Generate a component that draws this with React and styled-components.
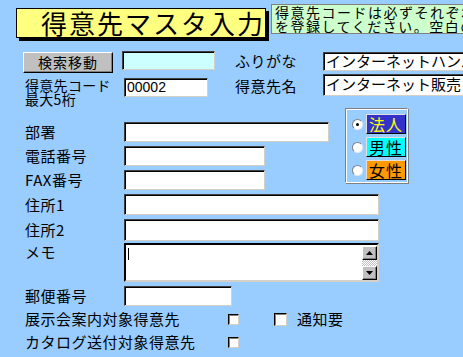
import React from 'react';
import styled, { createGlobalStyle } from 'styled-components';

const GlobalStyle = createGlobalStyle`
    body {
        margin: 0;
        background: #99ccff;
        font-family: 'Noto Sans CJK JP', 'Noto Sans', sans-serif;
    }
`;

const Page = styled.div`
    width: 463px;
    height: 357px;
    overflow: hidden;
    background: #99ccff;
    display: flex;
    flex-direction: column;
    color: #000;
`;

const Header = styled.div`
    display: flex;
    align-items: flex-start;
    height: 42px;
    flex: none;
`;

const TitleBox = styled.div`
    flex: none;
    box-sizing: border-box;
    margin: 8px 0 0 16px;
    width: 250px;
    height: 30px;
    padding-left: 24px;
    border: 1px solid #000;
    background: #ffff80;
    box-shadow: 3px 3px 0 #000;
    font-size: 26px;
    line-height: 28px;
    letter-spacing: 2px;
    white-space: nowrap;
`;

const Note = styled.div`
    flex: none;
    box-sizing: border-box;
    margin: 4px 0 0 5px;
    width: 230px;
    height: 30px;
    padding: 0 3px;
    border: 1px solid #808080;
    border-right: none;
    background: #ccffcc;
    font-size: 14px;
    line-height: 14px;
    letter-spacing: 1.5px;
    white-space: nowrap;
    overflow: hidden;
`;

const Line = styled.div`
    display: flex;
    align-items: flex-start;
    flex: none;
    height: ${p => p.h}px;
    margin-top: ${p => p.mt || 0}px;
    padding-left: ${p => p.pl || 25}px;
`;

const Button = styled.div`
    flex: none;
    box-sizing: border-box;
    width: 90px;
    height: 21px;
    margin-top: 1px;
    background: #c0c0c0;
    border: 1px solid;
    border-color: #fff #000 #000 #fff;
    box-shadow: inset -1px -1px 0 #808080;
    font-size: 14px;
    line-height: 18px;
    letter-spacing: 1px;
    text-align: center;
`;

const Field = styled.div`
    flex: none;
    box-sizing: border-box;
    width: ${p => p.w}px;
    height: ${p => p.h || 20}px;
    margin-top: ${p => p.mt || 0}px;
    margin-left: ${p => p.ml || 0}px;
    padding-left: 2px;
    background: ${p => p.bg || '#fff'};
    border: 1px solid;
    border-color: #404040 #d4d0c8 #d4d0c8 #404040;
    box-shadow: inset 1px 1px 0 #000;
    font-family: 'Liberation Sans', 'Noto Sans CJK JP', sans-serif;
    font-size: ${p => p.fs || 15}px;
    line-height: ${p => (p.h || 20) - 2}px;
    white-space: nowrap;
    overflow: hidden;
`;

const SideLabel = styled.div`
    flex: none;
    width: 88px;
    margin-left: ${p => p.ml}px;
    margin-top: ${p => p.mt || 0}px;
    font-size: 15px;
    line-height: 20px;
    letter-spacing: 0.5px;
`;

const CodeLabel = styled.div`
    flex: none;
    width: 99px;
    margin-top: 4px;
    font-size: 14px;
    line-height: 14px;
    letter-spacing: 0.3px;
    white-space: nowrap;
`;

const Middle = styled.div`
    display: flex;
    align-items: flex-start;
    flex: none;
    margin-top: 3px;
`;

const Rows = styled.div`
    display: flex;
    flex-direction: column;
    gap: ${p => p.gap || 4}px;
    padding-top: ${p => p.pt || 0}px;
    margin-top: ${p => p.mt || 0}px;
`;

const Row = styled.div`
    display: flex;
    align-items: ${p => (p.top ? 'flex-start' : 'center')};
    padding-left: 25px;
    margin-top: ${p => p.mt || 0}px;
`;

const Label = styled.div`
    flex: none;
    width: ${p => p.w || 99}px;
    font-size: 15px;
    line-height: 20px;
    letter-spacing: 0.5px;
    white-space: nowrap;
    margin-top: ${p => p.mt || 0}px;
`;

const RadioGroup = styled.div`
    flex: none;
    box-sizing: border-box;
    width: 63px;
    height: 75px;
    margin-left: 16px;
    padding: 5px 0 0 6px;
    border: 1px solid;
    border-color: #808080 #fff #fff #808080;
    box-shadow: inset 1px 1px 0 #fff, 1px 1px 0 #808080;
    display: flex;
    flex-direction: column;
    gap: 3px;
`;

const RadioItem = styled.div`
    display: flex;
    align-items: center;
    gap: 3px;
`;

const Radio = styled.div`
    flex: none;
    box-sizing: border-box;
    width: 11px;
    height: 11px;
    border-radius: 50%;
    background: #fff;
    border: 1px solid;
    border-color: #808080 #e8e8e8 #e8e8e8 #808080;
    display: flex;
    align-items: center;
    justify-content: center;
    &::after {
        content: '';
        width: 3px;
        height: 3px;
        border-radius: 50%;
        background: ${p => (p.checked ? '#000' : 'transparent')};
    }
`;

const Chip = styled.div`
    flex: none;
    box-sizing: border-box;
    width: 40px;
    height: 20px;
    background: ${p => p.bg};
    color: ${p => p.fg || '#000'};
    border: 1px solid;
    border-color: #e0e0e0 #000 #000 #e0e0e0;
    font-size: 16px;
    line-height: 18px;
    letter-spacing: 1px;
    text-align: center;
`;

const Memo = styled.div`
    flex: none;
    box-sizing: border-box;
    width: 255px;
    height: 39px;
    background: #fff;
    border: 2px solid;
    border-color: #000 #d4d0c8 #d4d0c8 #000;
    display: flex;
    justify-content: space-between;
    padding: 1px 0 0 2px;
`;

const Caret = styled.div`
    width: 1px;
    height: 12px;
    margin-top: 2px;
    background: #000;
`;

const ScrollBar = styled.div`
    flex: none;
    width: 15px;
    display: flex;
    flex-direction: column;
    justify-content: space-between;
    background: repeating-conic-gradient(#c0c0c0 0% 25%, #fff 0% 50%) 0 0 / 2px 2px;
    height: 34px;
`;

const ScrollButton = styled.div`
    box-sizing: border-box;
    height: 14px;
    background: #c0c0c0;
    border: 1px solid;
    border-color: #fff #000 #000 #fff;
    box-shadow: inset -1px -1px 0 #808080;
    display: flex;
    align-items: center;
    justify-content: center;
`;

const Check = styled.div`
    flex: none;
    box-sizing: border-box;
    width: ${p => p.s || 11}px;
    height: ${p => p.s || 11}px;
    margin-left: ${p => p.ml || 0}px;
    background: #fff;
    border: 1px solid;
    border-color: #000 #d4d0c8 #d4d0c8 #000;
    box-shadow: inset 1px 1px 0 #808080;
`;

const CheckText = styled.div`
    margin-left: 10px;
    font-size: 15px;
    line-height: 20px;
    letter-spacing: 0.5px;
`;

const Arrow = ({ up }) => (
    <svg width="7" height="4" viewBox="0 0 7 4">
        <path d={up ? 'M0 4 L3.5 0 L7 4 Z' : 'M0 0 L3.5 4 L7 0 Z'} fill="#000" />
    </svg>
);

export default function App() {
    return (
        <Page>
            <GlobalStyle />
            <Header>
                <TitleBox>得意先マスタ入力</TitleBox>
                <Note>
                    得意先コードは必ずそれぞれ
                    <br />
                    を登録してください。空白の
                </Note>
            </Header>

            <Line h={22} mt={9} pl={23}>
                <Button>検索移動</Button>
                <Field w={93} h={19} bg="#ccffff" ml={9} />
                <SideLabel ml={20}>ふりがな</SideLabel>
                <Field w={160} h={19} mt={1}>インターネットハンバイ</Field>
            </Line>

            <Line h={31} mt={1}>
                <CodeLabel>
                    得意先コード
                    <br />
                    最大5桁
                </CodeLabel>
                <Field w={84} h={19} mt={4} fs={14}>00002</Field>
                <SideLabel ml={27} mt={2}>得意先名</SideLabel>
                <Field w={160} h={22} mt={0}>インターネット販売</Field>
            </Line>

            <Middle>
                <Rows pt={14}>
                    <Row>
                        <Label>部署</Label>
                        <Field w={205} />
                    </Row>
                    <Row>
                        <Label>電話番号</Label>
                        <Field w={141} />
                    </Row>
                    <Row>
                        <Label>FAX番号</Label>
                        <Field w={141} />
                    </Row>
                </Rows>
                <RadioGroup>
                    <RadioItem>
                        <Radio checked />
                        <Chip bg="#3333cc" fg="#ffff00">法人</Chip>
                    </RadioItem>
                    <RadioItem>
                        <Radio />
                        <Chip bg="#00ffff">男性</Chip>
                    </RadioItem>
                    <RadioItem>
                        <Radio />
                        <Chip bg="#ff9900">女性</Chip>
                    </RadioItem>
                </RadioGroup>
            </Middle>

            <Rows mt={4}>
                <Row>
                    <Label>住所1</Label>
                    <Field w={255} h={21} />
                </Row>
                <Row>
                    <Label>住所2</Label>
                    <Field w={255} h={22} />
                </Row>
                <Row top mt={-2}>
                    <Label mt={-1}>メモ</Label>
                    <Memo>
                        <Caret />
                        <ScrollBar>
                            <ScrollButton><Arrow up /></ScrollButton>
                            <ScrollButton><Arrow /></ScrollButton>
                        </ScrollBar>
                    </Memo>
                </Row>
                <Row>
                    <Label>郵便番号</Label>
                    <Field w={108} />
                </Row>
            </Rows>

            <Rows gap={3} mt={3}>
                <Row>
                    <Label w={203}>展示会案内対象得意先</Label>
                    <Check />
                    <Check s={13} ml={35} />
                    <CheckText>通知要</CheckText>
                </Row>
                <Row>
                    <Label w={203}>カタログ送付対象得意先</Label>
                    <Check />
                </Row>
            </Rows>
        </Page>
    );
}
